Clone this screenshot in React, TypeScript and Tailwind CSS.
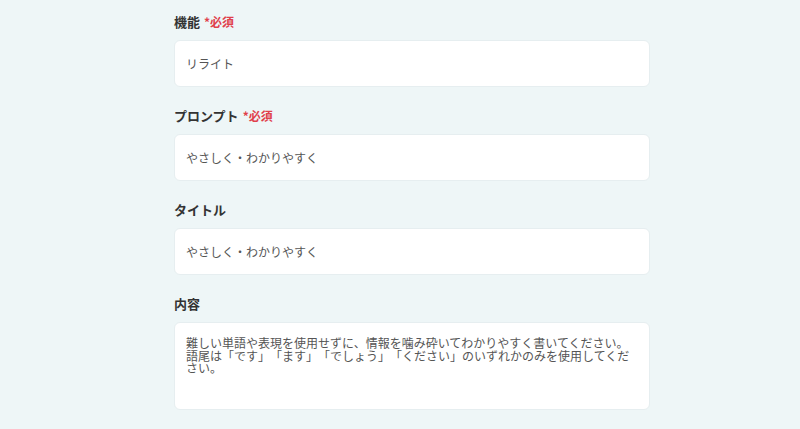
type Field = {
  label: string;
  required?: boolean;
  value: string;
  multiline?: boolean;
};

const fields: Field[] = [
  { label: "機能", required: true, value: "リライト" },
  { label: "プロンプト", required: true, value: "やさしく・わかりやすく" },
  { label: "タイトル", value: "やさしく・わかりやすく" },
  {
    label: "内容",
    value:
      "難しい単語や表現を使用せずに、情報を噛み砕いてわかりやすく書いてください。\n語尾は「です」「ます」「でしょう」「ください」のいずれかのみを使用してください。",
    multiline: true,
  },
];

const font = { fontFamily: '"Noto Sans CJK JP", "Noto Sans", sans-serif' };

export default function App() {
  return (
    <div className="h-screen overflow-hidden bg-[#eef6f7] pt-3 pl-[174px]" style={font}>
      <form className="flex w-[476px] flex-col gap-[19px]">
        {fields.map((field) => (
          <div key={field.label} className="flex flex-col gap-2">
            <label className="flex items-center gap-1 text-[13px] leading-5 font-bold text-[#333]">
              {field.label}
              {field.required ? (
                <span className="text-[12px] font-bold text-[#e0404b]">*必須</span>
              ) : null}
            </label>

            {field.multiline ? (
              <textarea
                readOnly
                defaultValue={field.value}
                className="h-[88px] resize-none overflow-hidden rounded-md border border-[#e6eef0] bg-white px-[11px] pt-[14px] text-[12px] leading-[12.5px] text-[#555] outline-none [text-spacing-trim:space-all]"
                style={font}
              />
            ) : (
              <input
                readOnly
                defaultValue={field.value}
                className="h-[47px] rounded-md border border-[#e6eef0] bg-white px-[11px] text-[12px] text-[#555] outline-none"
                style={font}
              />
            )}
          </div>
        ))}
      </form>
    </div>
  );
}
